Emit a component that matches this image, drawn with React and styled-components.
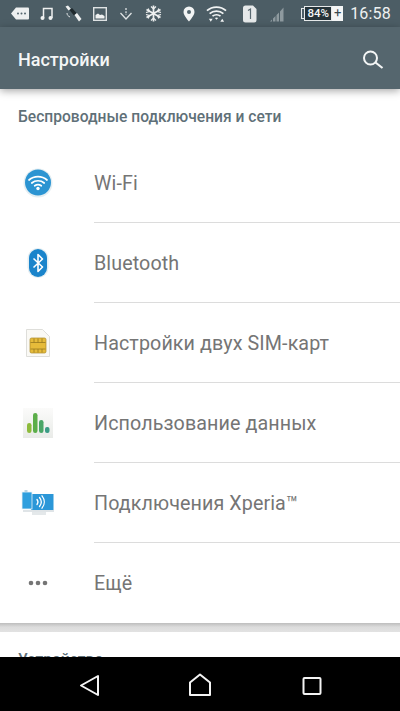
import React from "react";
import styled, { createGlobalStyle } from "styled-components";

const GlobalStyle = createGlobalStyle`
  html, body {
    margin: 0;
    padding: 0;
    background: #ffffff;
    font-family: Roboto, "Noto Sans", sans-serif;
  }
`;

function WifiIcon() {
  return (
    <svg width="32" height="32" viewBox="0 0 32 32">
      <circle cx="16" cy="16" r="14.5" fill="#e4eef2" />
      <circle cx="16" cy="15.5" r="13" fill="#2b94d2" />
      <g fill="none" stroke="#fff" strokeWidth="1.7" strokeLinecap="round">
        <path d="M7 13c5-4.6 13-4.6 18 0" />
        <path d="M9.8 16c3.4-3 9-3 12.400 0" />
        <path d="M12.7 18.800c2-1.500 4.600-1.500 6.600 0" />
      </g>
      <circle cx="16" cy="21.500" r="1.700" fill="#fff" />
    </svg>
  );
}

function BluetoothIcon() {
  return (
    <svg width="24" height="32" viewBox="0 0 24 32">
      <rect x="1.500" y="1" width="21" height="30" rx="10.500" fill="#e4eef2" />
      <rect x="3" y="2" width="18" height="28" rx="9" fill="#1a84cb" />
      <path d="M7.500 11.500l9 8.500-4.500 4.500V7.500l4.500 4.500-9 8.500" fill="none" stroke="#fff" strokeWidth="1.600" strokeLinejoin="round" />
    </svg>
  );
}

function SimIcon() {
  return (
    <svg width="26" height="32" viewBox="0 0 26 32">
      <path d="M1.500 2.500h16l7 7v20h-23z" fill="#faf9f5" stroke="#d6d6d2" strokeWidth="0.800" />
      <rect x="5" y="11" width="16" height="15" rx="1.500" fill="#e6bb3a" stroke="#a98a2c" strokeWidth="0.700" />
      <path d="M5.500 15.500h15M5.500 22h15M9 11.500v4M13 11.500v4M17 11.500v4M9 22v3.500M13 22v3.500M17 22v3.500" fill="none" stroke="#97791f" strokeWidth="0.800" />
    </svg>
  );
}

function DataIcon() {
  return (
    <svg width="30" height="30" viewBox="0 0 30 30">
      <defs>
        <linearGradient id="dataBg" x1="0" y1="0" x2="0" y2="1">
          <stop offset="0" stopColor="#fbfbfa" />
          <stop offset="1" stopColor="#e9ebe8" />
        </linearGradient>
      </defs>
      <rect width="30" height="30" fill="url(#dataBg)" />
      <rect x="4" y="15" width="4.500" height="10" rx="2.200" fill="#8dbb3c" />
      <rect x="10" y="5" width="4.500" height="20" rx="2.200" fill="#5cae4a" />
      <rect x="16" y="12" width="4.500" height="13" rx="2.200" fill="#49a667" />
      <rect x="22" y="19" width="4.500" height="6" rx="2" fill="#3b9c86" />
    </svg>
  );
}

function XperiaIcon() {
  return (
    <svg width="34" height="28" viewBox="0 0 34 28">
      <rect x="11" y="22" width="14" height="4" fill="#e4e8ea" />
      <rect x="2" y="21" width="31" height="2" fill="#dfe4e7" />
      <rect x="10" y="5" width="22.500" height="16" fill="#2b97d8" />
      <rect x="1" y="3" width="10" height="17" fill="#2f9fde" stroke="#e8f2f7" strokeWidth="0.800" />
      <rect x="3.500" y="1" width="3" height="2" fill="#b9d3e2" />
      <g fill="none" stroke="#fff" strokeWidth="1.300" strokeLinecap="round">
        <path d="M16 10.500c1.200 1.500 1.200 3.500 0 5" />
        <path d="M18.500 8.500c2.200 2.700 2.200 6.300 0 9" />
        <path d="M21 6.800c3 3.700 3 8.700 0 12.400" />
      </g>
    </svg>
  );
}

function DotsIcon() {
  return (
    <svg width="20" height="6" viewBox="0 0 20 6">
      <circle cx="3" cy="3" r="2.300" fill="#757575" />
      <circle cx="10" cy="3" r="2.300" fill="#757575" />
      <circle cx="17" cy="3" r="2.300" fill="#757575" />
    </svg>
  );
}

const rows = [
  { label: "Wi-Fi", icon: <WifiIcon /> },
  { label: "Bluetooth", icon: <BluetoothIcon /> },
  { label: "Настройки двух SIM-карт", icon: <SimIcon /> },
  { label: "Использование данных", icon: <DataIcon /> },
  { label: "Подключения Xperia™", icon: <XperiaIcon /> },
  { label: "Ещё", icon: <DotsIcon /> },
];

function NotificationIcons() {
  return (
    <>
      <StatusGlyph $width={18}>
        <svg width="18" height="13" viewBox="0 0 18 13">
          <path d="M5 0.500h12a1 1 0 0 1 1 1v10a1 1 0 0 1-1 1H5L0 6.500z" fill="#eef0f0" />
          <circle cx="7" cy="6.500" r="1" fill="#55676f" />
          <circle cx="10.500" cy="6.500" r="1" fill="#55676f" />
          <circle cx="14" cy="6.500" r="1" fill="#55676f" />
        </svg>
      </StatusGlyph>
      <StatusGlyph $width={13}>
        <svg width="13" height="15" viewBox="0 0 13 15">
          <path d="M3.500 12V2.500h8.500v9.500" fill="none" stroke="#eef0f0" strokeWidth="1.500" />
          <circle cx="2.500" cy="12" r="2" fill="#eef0f0" />
          <circle cx="10.500" cy="12" r="2" fill="#eef0f0" />
        </svg>
      </StatusGlyph>
      <StatusGlyph $width={18}>
        <svg width="17" height="17" viewBox="0 0 17 17">
          <path d="M0.500 1.500l2.500-1 3 3.500-2.500 1.500z" fill="#eef0f0" />
          <path d="M4.500 5l2.500-2 4.500 5-2.500 2.500z" fill="#1f292d" />
          <path d="M9.500 10l2.500-2 4.500 6-2.500 2.500z" fill="#eef0f0" />
          <path d="M2 8c0 2 1 3 3 4" fill="none" stroke="#dfe3e4" strokeWidth="1" />
        </svg>
      </StatusGlyph>
      <StatusGlyph $width={14}>
        <svg width="14" height="14" viewBox="0 0 14 14">
          <rect x="0.700" y="0.700" width="12.600" height="12.600" fill="none" stroke="#dfe3e4" strokeWidth="1.400" />
          <path d="M2.500 11.500V8l2.500-1.500 2 1.500 2-.5 2.500 1.500v2.500z" fill="#eef0f0" />
        </svg>
      </StatusGlyph>
      <StatusGlyph $width={16}>
        <svg width="14" height="14" viewBox="0 0 14 14">
          <path d="M1.500 6l5.500 6 5.500-6" fill="none" stroke="#dfe3e4" strokeWidth="1.300" />
          <path d="M7 1v7" fill="none" stroke="#dfe3e4" strokeWidth="1.300" strokeDasharray="2 1.200" />
        </svg>
      </StatusGlyph>
      <StatusGlyph $width={17}>
        <svg width="17" height="17" viewBox="0 0 17 17">
          <g stroke="#eef0f0" fill="none">
            <path d="M8.500 0.500v16M1.500 4.500l14 8M15.500 4.500l-14 8" strokeWidth="1.700" />
            <path d="M6 1.500l2.500 2.500 2.500-2.500M6 15.500L8.500 13l2.500 2.500M1 7.500l3.300-1-1-3M16 7.500l-3.300-1 1-3M1 9.500l3.300 1-1 3M16 9.500l-3.300 1 1 3" strokeWidth="1.200" />
          </g>
        </svg>
      </StatusGlyph>
    </>
  );
}

function SystemIcons() {
  return (
    <>
      <StatusGlyph $width={12}>
        <svg width="12" height="16" viewBox="0 0 12 16">
          <path d="M6 0.500a5.500 5.500 0 0 0-5.500 5.500c0 3.500 5.500 9.500 5.500 9.500s5.500-6 5.500-9.500A5.500 5.500 0 0 0 6 0.500z" fill="#f2f4f4" />
          <circle cx="6" cy="6" r="2" fill="#53656d" />
        </svg>
      </StatusGlyph>
      <StatusGlyph $width={21}>
        <svg width="22" height="18" viewBox="0 0 22 18">
          <g fill="none" stroke="#f2f4f4" strokeWidth="1.800">
            <path d="M1 5.500c5.500-5 14.500-5 20 0" />
            <path d="M3.800 8.500c4-3.500 10.400-3.500 14.400 0" />
            <path d="M6.800 11.300c2.400-2 6-2 8.400 0" />
          </g>
          <path d="M9.300 13.300c1-.7 2.400-.7 3.400 0L11 15z" fill="#f2f4f4" />
          <path d="M3 14h4l-2 3zM15 17h4l-2-3z" fill="#f2f4f4" />
        </svg>
      </StatusGlyph>
      <StatusGlyph $width={14} $before={5}>
        <svg width="14" height="18" viewBox="0 0 14 18">
          <path d="M2.500 0.500H10l3.500 3.500V15a2.500 2.500 0 0 1-2.500 2.500H2.500A2.500 2.500 0 0 1 0 15V3a2.500 2.500 0 0 1 2.500-2.500z" fill="#e6e9ea" />
          <path d="M5 5.500l2.500-1.500v10" fill="none" stroke="#5a6a72" strokeWidth="1.200" />
        </svg>
      </StatusGlyph>
      <StatusGlyph $width={17}>
        <svg width="16" height="16" viewBox="0 0 16 16">
          <path d="M1 15.500h2v-2zM4 15.500h2.500V10L4 12.500zM7.500 15.500H10V6.500L7.500 9zM11 15.500h3.500V1.500L11 5.500z" fill="#8e9a9f" />
        </svg>
      </StatusGlyph>
      <Battery>
        <BatteryCap />
        <BatteryBody>84%</BatteryBody>
        <BatteryPlus>+</BatteryPlus>
      </Battery>
      <Clock>16:58</Clock>
    </>
  );
}

export default function App() {
  return (
    <>
      <GlobalStyle />
      <Screen>
        <StatusBar>
          <StatusGroup>
            <NotificationIcons />
          </StatusGroup>
          <StatusGroup>
            <SystemIcons />
          </StatusGroup>
        </StatusBar>
        <Toolbar>
          <Title>Настройки</Title>
          <svg width="24" height="24" viewBox="0 0 24 24">
            <circle cx="9.500" cy="12" r="6.500" fill="none" stroke="#f4f6f6" strokeWidth="2" />
            <path d="M14.500 16.500l7 5.500" fill="none" stroke="#f4f6f6" strokeWidth="2.200" />
          </svg>
        </Toolbar>
        <Content>
          <Section>
            <SectionTitle>Беспроводные подключения и сети</SectionTitle>
            {rows.map((row) => (
              <Row key={row.label}>
                <IconCell>{row.icon}</IconCell>
                <RowLabel>{row.label}</RowLabel>
              </Row>
            ))}
          </Section>
          <Gap />
          <SectionTitle>Устройство</SectionTitle>
        </Content>
        <NavBar>
          <svg width="24" height="26" viewBox="0 0 24 26">
            <path d="M22 5v19L5 14.500z" fill="none" stroke="#f4f4f4" strokeWidth="2" strokeLinejoin="round" />
          </svg>
          <svg width="24" height="26" viewBox="0 0 24 26">
            <path d="M2 24V11.500l10-8 10 8V24z" fill="none" stroke="#f4f4f4" strokeWidth="2" strokeLinejoin="round" />
          </svg>
          <svg width="20" height="24" viewBox="0 0 20 24">
            <rect x="1.500" y="6" width="17" height="16" rx="1" fill="none" stroke="#f4f4f4" strokeWidth="2" />
          </svg>
        </NavBar>
      </Screen>
    </>
  );
}

const Screen = styled.div`
  width: 400px;
  height: 711px;
  display: flex;
  flex-direction: column;
  overflow: hidden;
  background: #ffffff;
`;

const StatusBar = styled.div`
  height: 27px;
  flex-shrink: 0;
  background: #4c5d65;
  display: flex;
  align-items: center;
  justify-content: space-between;
  padding: 0 9px 0 11px;
`;

const StatusGroup = styled.div`
  display: flex;
  align-items: center;
  gap: 11px;
`;

const StatusGlyph = styled.span`
  display: flex;
  align-items: center;
  justify-content: center;
  width: ${(p) => p.$width}px;
  margin-left: ${(p) => p.$before || 0}px;
`;

const Battery = styled.div`
  display: flex;
  align-items: center;
  height: 15px;
  margin-left: 5px;
`;

const BatteryCap = styled.span`
  width: 2px;
  height: 9px;
  border: 1px solid #e6e9ea;
  border-right: none;
`;

const BatteryBody = styled.span`
  height: 13px;
  width: 26px;
  border: 1px solid #e6e9ea;
  background: #26343a;
  color: #f4f6f6;
  font-size: 11.5px;
  font-weight: 500;
  line-height: 13px;
  text-align: center;
`;

const BatteryPlus = styled.span`
  width: 11px;
  height: 15px;
  background: #f4f6f6;
  color: #39484f;
  font-size: 13px;
  line-height: 14px;
  text-align: center;
`;

const Clock = styled.span`
  color: #eef1f1;
  font-size: 16px;
  letter-spacing: 0.2px;
  margin-left: -4px;
`;

const Toolbar = styled.header`
  height: 62px;
  flex-shrink: 0;
  background: #55666e;
  display: flex;
  align-items: center;
  justify-content: space-between;
  padding: 0 15px 0 18px;
  box-shadow: 0 2px 8px rgba(0, 0, 0, 0.35);
  position: relative;
  z-index: 1;
`;

const Title = styled.h1`
  margin: 0;
  padding-top: 2px;
  color: #f4f6f6;
  font-size: 18px;
  font-weight: 500;
`;

const Content = styled.main`
  flex: 1;
  min-height: 0;
  overflow: hidden;
  display: flex;
  flex-direction: column;
`;

const Section = styled.section`
  flex-shrink: 0;
`;

const SectionTitle = styled.h2`
  margin: 0;
  height: 54px;
  flex-shrink: 0;
  padding: 19px 0 0 18px;
  box-sizing: border-box;
  color: #5f7078;
  font-size: 15.6px;
  font-weight: 500;
  line-height: 18px;
`;

const Row = styled.div`
  height: 80px;
  display: flex;
  align-items: center;
  position: relative;

  &:not(:last-child)::after {
    content: "";
    position: absolute;
    left: 94px;
    right: 0;
    bottom: 0;
    height: 1px;
    background: #dcdcdc;
  }
`;

const IconCell = styled.div`
  width: 76px;
  margin-right: 18px;
  display: flex;
  justify-content: center;
`;

const RowLabel = styled.span`
  color: #757575;
  font-size: 19.7px;
  letter-spacing: 0.1px;
`;

const Gap = styled.div`
  height: 9px;
  flex-shrink: 0;
  background: linear-gradient(to bottom, #bdbdbd, #dcdcdc 45%, #e2e2e2);
`;

const NavBar = styled.nav`
  height: 54px;
  flex-shrink: 0;
  background: #000000;
  display: grid;
  grid-template-columns: repeat(3, 112px);
  justify-content: center;
  justify-items: center;
  align-items: center;
`;
